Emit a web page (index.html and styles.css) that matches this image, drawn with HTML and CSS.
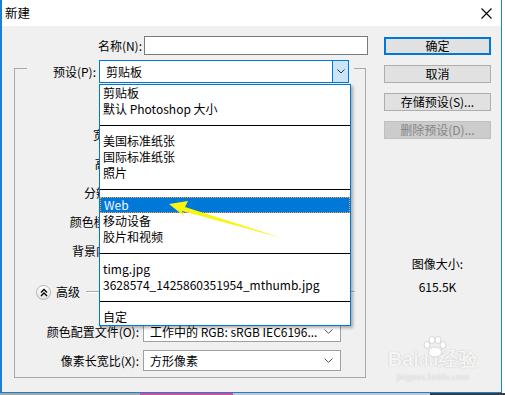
FILE: index.html
```html
<!DOCTYPE html>
<html>
  <head>
    <meta charset="utf-8">
    <link rel="stylesheet" href="styles.css">
  </head>
  <body>
    <div class="window">
        <div class="titlebar">
            <span class="title">新建</span>
            <svg class="close" width="11" height="11" viewBox="0 0 11 11"><path d="M0.5 0.5 L10.5 10.5 M10.5 0.5 L0.5 10.5" stroke="#000" stroke-width="1.1" fill="none"/></svg>
        </div>
        <div class="dialog">
            <div class="form">
                <div class="name-row">
                    <label class="label">名称(N):</label>
                    <div class="textbox"></div>
                </div>
                <fieldset class="group">
                    <legend class="preset">
                        <label class="preset-label">预设(P):</label>
                        <div class="combo">
                            <span class="combo-text">剪贴板</span>
                            <span class="combo-btn">
                                <svg width="8" height="5" viewBox="0 0 8 5"><polyline points="0.5,0.5 4,4 7.5,0.5" stroke="#333" fill="none"/></svg>
                            </span>
                        </div>
                    </legend>
                    <div class="fields">
                        <div class="field"><label class="field-label">宽度(W):</label><div class="textbox small"></div></div>
                        <div class="field"><label class="field-label">高度(H):</label><div class="textbox small"></div></div>
                        <div class="field"><label class="field-label">分辨率(R):</label><div class="textbox small"></div></div>
                        <div class="field"><label class="field-label">颜色模式(M):</label><div class="textbox small"></div></div>
                        <div class="field"><label class="field-label">背景内容(C):</label><div class="textbox small"></div></div>
                    </div>
                    <div class="advanced">
                        <span class="round-btn">
                            <svg width="8" height="9" viewBox="0 0 8 9"><polyline points="1,4.5 4,1.5 7,4.5" stroke="#000" stroke-width="1.3" fill="none"/><polyline points="1,8 4,5 7,8" stroke="#000" stroke-width="1.3" fill="none"/></svg>
                        </span>
                        <span class="advanced-text">高级</span>
                        <span class="rule"></span>
                    </div>
                    <div class="field profile">
                        <label class="field-label">颜色配置文件(O):</label>
                        <div class="select">
                            <span class="select-text">工作中的 RGB: sRGB IEC6196...</span>
                            <svg width="9" height="5" viewBox="0 0 9 5"><polyline points="0.5,0.5 4.5,4.3 8.5,0.5" stroke="#555" fill="none"/></svg>
                        </div>
                    </div>
                    <div class="field aspect">
                        <label class="field-label">像素长宽比(X):</label>
                        <div class="select">
                            <span class="select-text">方形像素</span>
                            <svg width="9" height="5" viewBox="0 0 9 5"><polyline points="0.5,0.5 4.5,4.3 8.5,0.5" stroke="#555" fill="none"/></svg>
                        </div>
                    </div>
                </fieldset>
            </div>
            <div class="side">
                <button class="btn primary">确定</button>
                <button class="btn">取消</button>
                <button class="btn">存储预设(S)...</button>
                <button class="btn" disabled>删除预设(D)...</button>
                <div class="info">
                    <div>图像大小:</div>
                    <div class="info-value">615.5K</div>
                </div>
            </div>
        </div>

        <ul class="dropdown">
            <li>剪贴板</li>
            <li>默认 Photoshop 大小</li>
            <li class="sep"></li>
            <li>美国标准纸张</li>
            <li>国际标准纸张</li>
            <li>照片</li>
            <li class="sep"></li>
            <li class="selected">Web</li>
            <li>移动设备</li>
            <li>胶片和视频</li>
            <li class="sep"></li>
            <li>timg.jpg</li>
            <li>3628574_1425860351954_mthumb.jpg</li>
            <li class="sep"></li>
            <li>自定</li>
        </ul>

        <svg class="pointer" width="120" height="44" viewBox="0 0 120 44">
            <polygon points="2,7 21,4 18,10 115,41 15,14 17,19" fill="#f8f510"/>
        </svg>

        <div class="watermark">
            <svg class="paw" width="26" height="22" viewBox="0 0 26 22">
                <g fill="#fff" stroke="#d6d6d6" stroke-width="1">
                    <ellipse cx="5" cy="9" rx="3" ry="3.5"/>
                    <ellipse cx="10" cy="4" rx="3" ry="3.5"/>
                    <ellipse cx="16" cy="4" rx="3" ry="3.5"/>
                    <ellipse cx="21" cy="9" rx="3" ry="3.5"/>
                    <ellipse cx="13" cy="16" rx="6.5" ry="5"/>
                </g>
            </svg>
            <div class="wm-logo">Bai<span class="wm-du">du</span>经验</div>
            <div class="wm-url">jingyan.baidu.com</div>
        </div>
    </div>
  </body>
</html>
```

FILE: styles.css
```css
html, body {
    margin: 0;
}

body {
    width: 505px;
    height: 395px;
    overflow: hidden;
    font: 12px/16px "Noto Sans CJK SC", "Noto Sans", sans-serif;
    color: #000;
    background: linear-gradient(to right, #a9a898 0 140px, #d64d8a 140px 233px, #cbc6c6 233px 430px, #3c3c3c 430px) bottom / 100% 2px no-repeat, #fff;
}

.window {
    position: relative;
    width: 499px;
    height: 392px;
    border: 1px solid #1c7fd6;
    border-left-width: 2px;
    border-top: 0;
    background: #f0f0f0;
}

.titlebar {
    height: 26px;
    background: #fff;
    display: flex;
    align-items: center;
    padding: 0 9px 0 3px;
}

.title {
    font-size: 12.5px;
}

.close {
    margin-left: auto;
}

.dialog {
    display: flex;
}

.form {
    width: 366px;
    padding-top: 10px;
}

.name-row {
    display: flex;
    align-items: center;
    margin-bottom: -2px;
}

.label {
    width: 140px;
    margin-right: 2px;
    text-align: right;
}

.textbox {
    width: 224px;
    height: 19px;
    box-sizing: border-box;
    border: 1px solid #7a7a7a;
    background: #fff;
}

.textbox.small {
    width: 110px;
    height: 21px;
}

.group {
    width: 352px;
    box-sizing: border-box;
    margin: 0 0 0 12px;
    padding: 0 0 6px;
    min-width: 0;
    border: 1px solid #a9a9a9;
}

.preset {
    margin-left: 12px;
    padding: 7px 5px 0 0;
    display: flex;
    align-items: center;
}

.preset-label {
    width: 69px;
    margin-right: 3px;
    text-align: right;
}

.combo {
    width: 250px;
    height: 23px;
    box-sizing: border-box;
    border: 1px solid #0078d7;
    background: #fff;
    display: flex;
}

.combo-text {
    flex: 1;
    padding-left: 6px;
    line-height: 21px;
}

.combo-btn {
    width: 15px;
    border-left: 1px solid #0078d7;
    background: #cce4f7;
    display: flex;
    align-items: center;
    justify-content: center;
}

.fields {
    display: grid;
    gap: 7px;
    margin-top: 41px;
}

.field {
    display: flex;
    align-items: center;
    height: 22px;
}

.field-label {
    width: 124px;
    margin-right: 4px;
    text-align: right;
}

.advanced {
    display: flex;
    align-items: center;
    height: 16px;
    margin-top: 22px;
    padding-left: 21px;
}

.round-btn {
    width: 15px;
    height: 15px;
    box-sizing: border-box;
    border: 1px solid #b4b4b4;
    border-radius: 50%;
    background: linear-gradient(#ffffff, #e3e3e3);
    display: flex;
    align-items: center;
    justify-content: center;
}

.advanced-text {
    margin-left: 5px;
}

.rule {
    flex: 1;
    margin: 0 10px 0 6px;
    border-top: 1px solid #a9a9a9;
    border-bottom: 1px solid #fff;
}

.profile {
    margin-top: 21px;
    height: 21px;
}

.aspect {
    margin-top: 8px;
    height: 21px;
}

.select {
    width: 198px;
    height: 21px;
    box-sizing: border-box;
    border: 1px solid #a0a0a0;
    background: #fff;
    display: flex;
    align-items: center;
    padding: 0 7px 0 6px;
}

.select-text {
    flex: 1;
    white-space: nowrap;
}

.side {
    width: 107px;
    margin-left: 16px;
    padding-top: 11px;
}

.btn {
    display: block;
    width: 100%;
    height: 18px;
    box-sizing: border-box;
    margin: 0 0 10px;
    padding: 0;
    border: 1px solid #adadad;
    background: #e1e1e1;
    font: inherit;
    line-height: 16px;
    color: #000;
}

.btn.primary {
    border: 2px solid #0078d7;
    line-height: 14px;
}

.btn:disabled {
    background: #cccccc;
    border-color: #bfbfbf;
    color: #838383;
}

.info {
    margin-top: 117px;
    text-align: center;
}

.info-value {
    margin-top: 7px;
}

.dropdown {
    position: absolute;
    left: 97px;
    top: 84px;
    width: 252px;
    box-sizing: border-box;
    margin: 0;
    padding: 0;
    list-style: none;
    border: 1px solid #0078d7;
    background: #fff;
    box-shadow: 2px 2px 3px rgba(0, 0, 0, 0.3);
}

.dropdown li {
    height: 16px;
    line-height: 16px;
    padding-left: 3px;
    white-space: nowrap;
}

.dropdown .sep {
    position: relative;
}

.dropdown .sep::after {
    content: "";
    position: absolute;
    left: 0;
    right: 0;
    top: 8px;
    height: 1px;
    background: #000;
}

.dropdown .selected {
    background: #0078d7;
    color: #f2f6ff;
    outline: 1px dotted #f0a040;
    outline-offset: -1px;
    padding-left: 4px;
}

.pointer {
    position: absolute;
    left: 165px;
    top: 197px;
}

.watermark {
    position: absolute;
    left: 383px;
    top: 336px;
    width: 96px;
    text-align: center;
    color: rgba(255, 255, 255, 0.9);
    text-shadow: 0 0 1px rgba(0, 0, 0, 0.3);
}

.paw {
    position: absolute;
    left: 37px;
    top: 0;
}

.wm-logo {
    margin-top: 12px;
    font: bold 20px/22px "Liberation Sans", sans-serif;
}

.wm-du {
    font-size: 16px;
}

.wm-url {
    font: 9px/11px "Liberation Sans", sans-serif;
}
```
